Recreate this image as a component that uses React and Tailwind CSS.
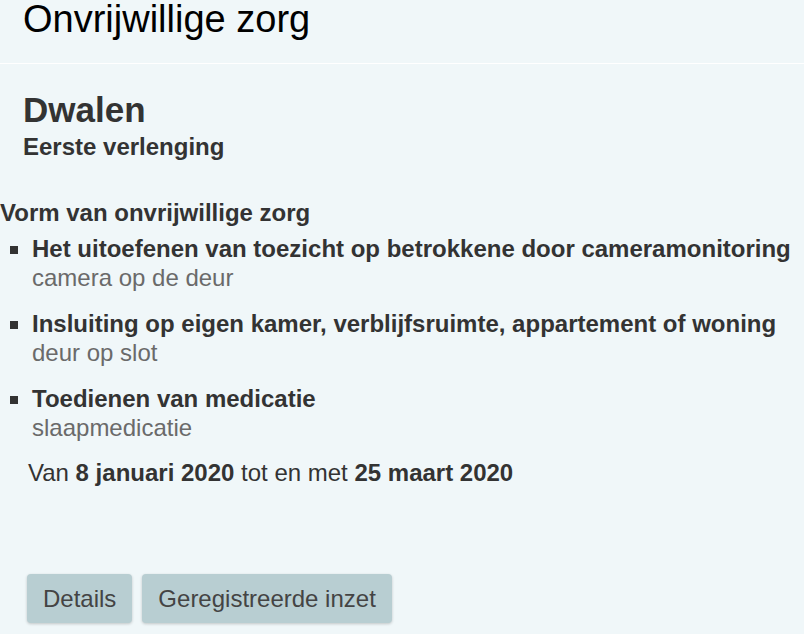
const items = [
  {
    title: "Het uitoefenen van toezicht op betrokkene door cameramonitoring",
    note: "camera op de deur",
  },
  {
    title: "Insluiting op eigen kamer, verblijfsruimte, appartement of woning",
    note: "deur op slot",
  },
  { title: "Toedienen van medicatie", note: "slaapmedicatie" },
];

const App = () => {
  return (
    <div className="min-h-[634px] bg-[#f0f7f9] overflow-hidden font-['Liberation_Sans',Arial,sans-serif]">
      <div className="h-[63px] border-b border-white box-content">
        <h1 className="pl-[23px] text-[38px] leading-[38px] text-black">
          Onvrijwillige zorg
        </h1>
      </div>

      <div className="pl-[23px]">
        <h2 className="mt-[28px] text-[35px] leading-[35px] font-bold text-[#333]">
          Dwalen
        </h2>
        <div className="mt-[8px] text-[24px] leading-[24px] font-bold text-[#333]">
          Eerste verlenging
        </div>
      </div>

      <div className="mt-[42px] text-[24px] leading-[24px] font-bold text-[#333]">
        Vorm van onvrijwillige zorg
      </div>

      <ul className="mt-[9px] flex flex-col gap-[17px]">
        {items.map((item) => (
          <li key={item.title} className="flex">
            <span className="ml-[10px] mt-[12px] w-[8px] h-[8px] bg-[#333] shrink-0" />
            <div className="ml-[14px] text-[24px] leading-[29px] whitespace-nowrap">
              <div className="font-bold text-[#333]">{item.title}</div>
              <div className="text-[#6a6a6a]">{item.note}</div>
            </div>
          </li>
        ))}
      </ul>

      <p className="mt-[19px] pl-[28px] text-[24px] leading-[24px] text-[#333]">
        Van <b>8 januari 2020</b> tot en met <b>25 maart 2020</b>
      </p>

      <div className="mt-[89px] pl-[27px] flex gap-[10px]">
        <button className="h-[49px] px-[16px] rounded-[4px] bg-[#b8ced2] text-[24px] leading-[29px] text-[#444] shadow-[0_1px_3px_rgba(0,0,0,0.2)]">
          Details
        </button>
        <button className="h-[49px] px-[16px] rounded-[4px] bg-[#b8ced2] text-[24px] leading-[29px] text-[#444] shadow-[0_1px_3px_rgba(0,0,0,0.2)]">
          Geregistreerde inzet
        </button>
      </div>
    </div>
  );
};

export default App;
